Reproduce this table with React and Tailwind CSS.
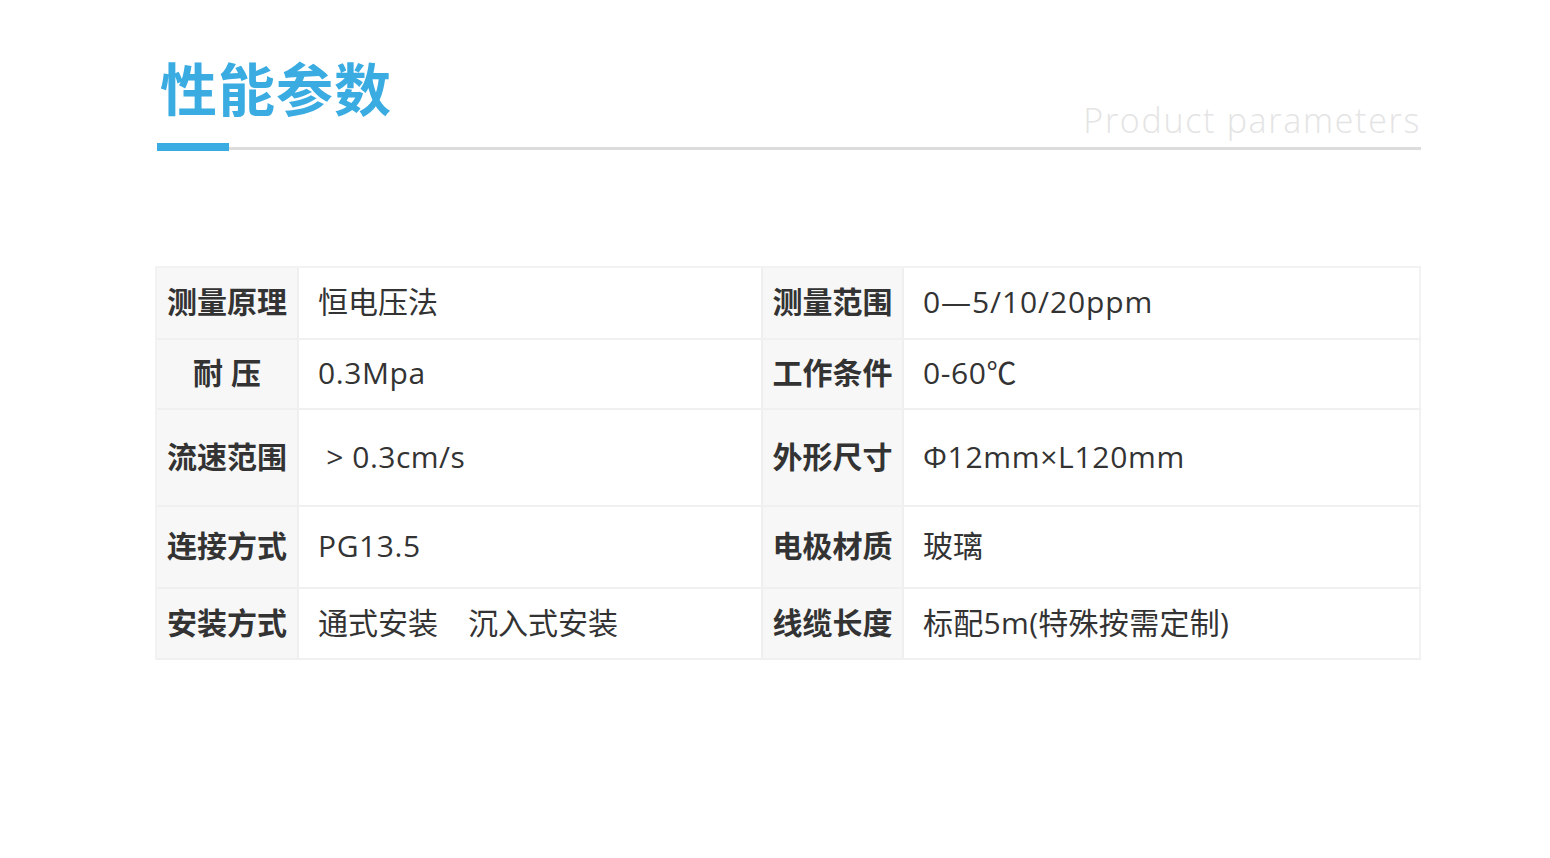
export default function App() {
  const rows = [
    { h: "h-[72px]", l1: "测量原理", v1: "恒电压法", t1: "", l2: "测量范围", v2: "0—5/10/20ppm", t2: "tracking-[0.9px]" },
    { h: "h-[70px]", l1: "耐 压", v1: "0.3Mpa", t1: "tracking-[0.6px]", l2: "工作条件", v2: "0-60℃", t2: "tracking-[0.6px]" },
    { h: "h-[97px]", l1: "流速范围", v1: "\u00a0> 0.3cm/s", t1: "tracking-[0.5px]", l2: "外形尺寸", v2: "Φ12mm×L120mm", t2: "tracking-[0.7px]" },
    { h: "h-[82px]", l1: "连接方式", v1: "PG13.5", t1: "tracking-[0.6px]", l2: "电极材质", v2: "玻璃", t2: "" },
    { h: "h-[71px]", l1: "安装方式", v1: "通式安装\u3000沉入式安装", t1: "", l2: "线缆长度", v2: "标配5m(特殊按需定制)", t2: "tracking-[0.3px]" },
  ];
  const font = { fontFamily: '"Open Sans", "Noto Sans CJK SC", sans-serif' };
  return (
    <div className="w-[1550px] h-[858px] bg-white" style={font}>
      <div className="ml-[155px] w-[1266px]">
        <div className="pt-[48px] flex justify-between items-end">
          <div className="pl-[5px] text-[57px] leading-[76px] font-bold text-[#3aace2] tracking-[1px]" style={{ fontFamily: '"Noto Sans CJK SC", sans-serif' }}>性能参数</div>
          <div className="text-[34px] leading-[40px] font-light text-[#e4e4e4] tracking-[1.7px] mb-[-16px]" style={{ fontFamily: '"Open Sans", sans-serif' }}>Product parameters</div>
        </div>
        <div className="relative h-[8px] mt-[19px] ml-[2px]">
          <div className="absolute left-0 right-0 top-[4px] h-[3px] bg-[#dcdcdc]"></div>
          <div className="absolute left-0 top-0 w-[72px] h-[8px] bg-[#3aace2]"></div>
        </div>
        <div className="mt-[115px] border-t-2 border-l-2 border-[#f2f2f2]">
          {rows.map((r, i) => (
            <div key={i} className={`flex ${r.h} border-b-2 border-[#f0f0f0] text-[30px] text-[#333333]`}>
              <div className="w-[142px] pb-[3px] bg-[#f7f7f7] border-r-2 border-[#efefef] flex items-center justify-center font-bold">{r.l1}</div>
              <div className={`w-[462px] pb-[3px] flex items-center pl-[19px] ${r.t1}`}>{r.v1}</div>
              <div className="w-[143px] pb-[3px] bg-[#f7f7f7] border-l-2 border-r-2 border-[#efefef] flex items-center justify-center font-bold">{r.l2}</div>
              <div className={`flex-1 pb-[3px] flex items-center pl-[19px] border-r-2 border-[#f2f2f2] ${r.t2}`}>{r.v2}</div>
            </div>
          ))}
        </div>
      </div>
    </div>
  );
}
